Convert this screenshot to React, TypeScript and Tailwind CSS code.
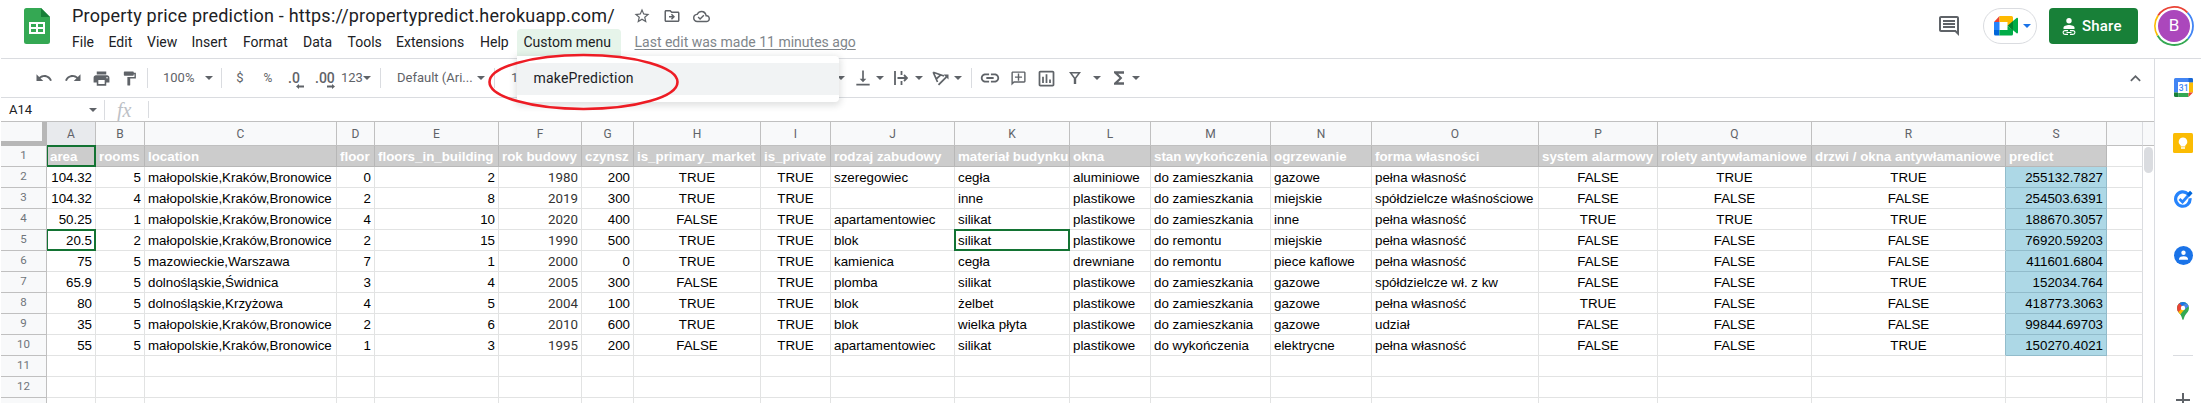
import type { ReactNode } from "react";
import {
  MdUndo, MdRedo, MdPrint, MdFormatPaint, MdVerticalAlignBottom, MdLink, MdOutlineAddComment,
  MdOutlineInsertChart, MdFunctions, MdStarBorder, MdOutlineDriveFileMove,
  MdOutlineCloudDone, MdOutlineInsertComment, MdKeyboardArrowUp, MdAdd,
} from "react-icons/md";

type Align = "left" | "right" | "center";
type Column = { id: string; width: string; align: Align; title: string; values: string[]; font?: string };

const TRUE = "TRUE";
const FALSE = "FALSE";
const krk = "małopolskie,Kraków,Bronowice";

const columns: Column[] = [
  { id: "A", width: "w-[49px]", align: "right", title: "area", values: ["104.32", "104.32", "50.25", "20.5", "75", "65.9", "80", "35", "55"] },
  { id: "B", width: "w-[49px]", align: "right", title: "rooms", values: ["5", "4", "1", "2", "5", "5", "5", "5", "5"] },
  { id: "C", width: "w-[192px]", align: "left", title: "location", values: [krk, krk, krk, krk, "mazowieckie,Warszawa", "dolnośląskie,Świdnica", "dolnośląskie,Krzyżowa", krk, krk] },
  { id: "D", width: "w-[38px]", align: "right", title: "floor", values: ["0", "2", "4", "2", "7", "3", "4", "2", "1"] },
  { id: "E", width: "w-[124px]", align: "right", title: "floors_in_building", values: ["2", "8", "10", "15", "1", "4", "5", "6", "3"] },
  { id: "F", width: "w-[83px]", align: "right", title: "rok budowy", font: "font-['Roboto',sans-serif] text-[#333333]", values: ["1980", "2019", "2020", "1990", "2000", "2005", "2004", "2010", "1995"] },
  { id: "G", width: "w-[52px]", align: "right", title: "czynsz", values: ["200", "300", "400", "500", "0", "300", "100", "600", "200"] },
  { id: "H", width: "w-[127px]", align: "center", title: "is_primary_market", values: [TRUE, TRUE, FALSE, TRUE, TRUE, FALSE, TRUE, TRUE, FALSE] },
  { id: "I", width: "w-[70px]", align: "center", title: "is_private", values: [TRUE, TRUE, TRUE, TRUE, TRUE, TRUE, TRUE, TRUE, TRUE] },
  { id: "J", width: "w-[124px]", align: "left", title: "rodzaj zabudowy", values: ["szeregowiec", "", "apartamentowiec", "blok", "kamienica", "plomba", "blok", "blok", "apartamentowiec"] },
  { id: "K", width: "w-[115px]", align: "left", title: "materiał budynku", values: ["cegła", "inne", "silikat", "silikat", "cegła", "silikat", "żelbet", "wielka płyta", "silikat"] },
  { id: "L", width: "w-[81px]", align: "left", title: "okna", values: ["aluminiowe", "plastikowe", "plastikowe", "plastikowe", "drewniane", "plastikowe", "plastikowe", "plastikowe", "plastikowe"] },
  { id: "M", width: "w-[120px]", align: "left", title: "stan wykończenia", values: ["do zamieszkania", "do zamieszkania", "do zamieszkania", "do remontu", "do remontu", "do zamieszkania", "do zamieszkania", "do zamieszkania", "do wykończenia"] },
  { id: "N", width: "w-[101px]", align: "left", title: "ogrzewanie", values: ["gazowe", "miejskie", "inne", "miejskie", "piece kaflowe", "gazowe", "gazowe", "gazowe", "elektrycne"] },
  { id: "O", width: "w-[167px]", align: "left", title: "forma własności", values: ["pełna własność", "spółdzielcze właśnościowe", "pełna własność", "pełna własność", "pełna własność", "spółdzielcze wł. z kw", "pełna własność", "udział", "pełna własność"] },
  { id: "P", width: "w-[119px]", align: "center", title: "system alarmowy", values: [FALSE, FALSE, TRUE, FALSE, FALSE, FALSE, TRUE, FALSE, FALSE] },
  { id: "Q", width: "w-[154px]", align: "center", title: "rolety antywłamaniowe", values: [TRUE, FALSE, TRUE, FALSE, FALSE, FALSE, FALSE, FALSE, FALSE] },
  { id: "R", width: "w-[194px]", align: "center", title: "drzwi / okna antywłamaniowe", values: [TRUE, FALSE, TRUE, FALSE, FALSE, TRUE, FALSE, FALSE, TRUE] },
  { id: "S", width: "w-[101px]", align: "right", title: "predict", values: ["255132.7827", "254503.6391", "188670.3057", "76920.59203", "411601.6804", "152034.764", "418773.3063", "99844.69703", "150270.4021"] },
];

const menus = [
  { label: "File", width: "w-[36.5px]" },
  { label: "Edit", width: "w-[38.5px]" },
  { label: "View", width: "w-[44.5px]" },
  { label: "Insert", width: "w-[51.5px]" },
  { label: "Format", width: "w-[60px]" },
  { label: "Data", width: "w-[44.5px]" },
  { label: "Tools", width: "w-[48.5px]" },
  { label: "Extensions", width: "w-[84px]" },
  { label: "Help", width: "w-[43.5px]" },
];

const justify: Record<Align, string> = { left: "justify-start", right: "justify-end", center: "justify-center" };

function Caret({ className = "text-[#5f6368]" }: { className?: string }) {
  return (
    <svg width="8" height="4" viewBox="0 0 8 4" className={`shrink-0 ${className}`}>
      <path d="M0 0h8L4 4z" fill="currentColor" />
    </svg>
  );
}

function Slot({ width, children }: { width: string; children?: ReactNode }) {
  return <div className={`flex shrink-0 items-center justify-center ${width}`}>{children}</div>;
}

function Rule() {
  return <div className="h-5 w-px shrink-0 bg-[#dadce0]" />;
}

function SheetsLogo() {
  return (
    <svg width="26" height="36" viewBox="0 0 26 36" className="shrink-0">
      <path d="M2.5 0H17l9 9v24.500a2.500 2.500 0 0 1-2.500 2.500h-21A2.500 2.500 0 0 1 0 33.500v-31A2.500 2.500 0 0 1 2.500 0z" fill="#34a853" />
      <path d="M17 0l9 9h-9z" fill="#188038" />
      <path d="M5 14h16v12H5zM7 16v3h5v-3zM14 16v3h5v-3zM7 21v3h5v-3zM14 21v3h5v-3z" fill="#fff" fillRule="evenodd" />
    </svg>
  );
}

function MeetIcon() {
  return (
    <svg width="24" height="20" viewBox="0 0 24 20" className="shrink-0">
      <path d="M5.500 0v6H0z" fill="#ea4335" />
      <path d="M0 6h5.500v8H0z" fill="#2684fc" />
      <path d="M0 14h5.500v5.500H1.500A1.500 1.500 0 0 1 0 18z" fill="#0066da" />
      <path d="M5.500 0H17.500A1.500 1.500 0 0 1 19 1.500V6l-5.500 4V6h-8z" fill="#ffba00" />
      <path d="M5.500 14h8v-4L19 14v4a1.500 1.500 0 0 1-1.500 1.500h-12z" fill="#00ac47" />
      <path d="M13.500 9.700L19 5v9.500z" fill="#00832d" />
      <path d="M19 5l3.600-3c.6-.5 1.400-.1 1.400.6v14c0 .8-.8 1.100-1.400.6L19 14.300z" fill="#00ac47" />
    </svg>
  );
}

function ShareIcon() {
  return (
    <svg width="14" height="17" viewBox="0 0 14 17" className="shrink-0">
      <circle cx="7" cy="2.700" r="2.700" fill="#fff" />
      <path d="M1.500 11V9.700C1.500 7.900 4.500 7 7 7s5.500.9 5.500 2.700V11z" fill="#fff" />
      <path d="M6 12.600H3a1.900 1.900 0 0 0 0 3.800h3M8 12.600h3a1.900 1.900 0 0 1 0 3.800H8M4.500 14.500h5" fill="none" stroke="#fff" strokeWidth="1.100" />
    </svg>
  );
}

function Avatar() {
  return (
    <div className="relative flex h-10 w-10 shrink-0 items-center justify-center">
      <svg width="40" height="40" viewBox="0 0 40 40" className="absolute inset-0" fill="none" strokeWidth="1.800">
        <path d="M4.100 9.500A19 19 0 0 1 33.500 6.600" stroke="#ea4335" />
        <path d="M33.500 6.600A19 19 0 0 1 34 32.800" stroke="#4285f4" />
        <path d="M34 32.800A19 19 0 0 1 3.500 29.500" stroke="#34a853" />
        <path d="M3.500 29.500A19 19 0 0 1 4.100 9.500" stroke="#fbbc04" />
      </svg>
      <div className="flex h-8 w-8 items-center justify-center rounded-full bg-[#ab47bc] text-[17px] text-white">B</div>
    </div>
  );
}

function TopBar() {
  return (
    <header className="flex h-[58px] shrink-0 pl-6">
      <div className="pt-2"><SheetsLogo /></div>
      <div className="flex flex-col">
        <div className="flex h-[29px] items-center pl-[22px] pt-[3px]">
          <div className="w-[560px] whitespace-nowrap text-[18px] leading-6 tracking-[0.22px] text-[#202124]">
            Property price prediction - https://propertypredict.herokuapp.com/
          </div>
          <div className="flex text-[#5f6368]">
            <Slot width="w-[20px]"><MdStarBorder size={18} /></Slot>
            <Slot width="w-[39px]"><MdOutlineDriveFileMove size={18} /></Slot>
            <Slot width="w-[21px]"><MdOutlineCloudDone size={17} /></Slot>
          </div>
        </div>
        <nav className="flex h-[27px] items-center pl-[15px] text-[14px] text-[#202124]">
          {menus.map((m) => (
            <div key={m.label} className={`shrink-0 whitespace-nowrap pl-[7px] ${m.width}`}>{m.label}</div>
          ))}
          <div className="relative h-[27px] w-[104px] shrink-0 rounded-t bg-[#e6f4ea] pl-[7px] leading-[27px]">
            Custom menu
            <div className="absolute left-0 top-[27px] z-10 h-[46px] w-[322px] rounded-b rounded-tr bg-white py-[7px] shadow-[0_2px_6px_2px_rgba(60,64,67,0.15)]">
              <div className="h-8 bg-[#f1f3f4] pl-[17px] leading-[31px] tracking-[0.2px]">makePrediction</div>
            </div>
            <svg width="196" height="62" viewBox="0 0 196 62" className="absolute left-[-31px] top-[22px] z-20">
              <ellipse cx="97.500" cy="31" rx="94" ry="27" fill="none" stroke="#ed1c24" strokeWidth="2.600" />
            </svg>
          </div>
          <div className="pl-[14px] text-[#80868b] underline underline-offset-2">Last edit was made 11 minutes ago</div>
        </nav>
      </div>
      <div className="ml-auto flex items-start pr-[7px] pt-2">
        <div className="mr-[22px] flex h-9 items-center text-[#5f6368]"><MdOutlineInsertComment size={24} /></div>
        <div className="mr-3 flex h-9 w-[54px] items-center rounded-full border border-[#dadce0] pl-[10px]">
          <MeetIcon />
          <span className="ml-[5px]"><Caret className="text-[#1a73e8]" /></span>
        </div>
        <div className="mr-4 flex h-9 w-[89px] items-center rounded bg-[#188038] pl-[13px] text-[15px] font-medium tracking-[0.2px] text-white">
          <ShareIcon />
          <span className="ml-[6px]">Share</span>
        </div>
        <div className="-mt-[2px]"><Avatar /></div>
      </div>
    </header>
  );
}

function Decimal({ text, forward }: { text: string; forward?: boolean }) {
  return (
    <div className="relative text-[14px] font-medium leading-4">
      {text}
      <svg width="8" height="5" viewBox="0 0 8 5" className={`absolute top-[14px] ${forward ? "-right-[2px] -scale-x-100" : "-right-[5px]"}`}>
        <path d="M0 2.500L3 0v1.600h5v1.800H3V5z" fill="#5f6368" />
      </svg>
    </div>
  );
}

function Toolbar() {
  return (
    <div className="flex h-[38px] shrink-0 items-center pl-[28px] text-[13px] text-[#5f6368]">
      <Slot width="w-[29px]"><MdUndo size={18} /></Slot>
      <Slot width="w-[29px]"><MdRedo size={18} /></Slot>
      <Slot width="w-[28px]"><MdPrint size={19} /></Slot>
      <Slot width="w-[29px]"><MdFormatPaint size={17} /></Slot>
      <div className="w-[3px]" />
      <Rule />
      <div className="w-[57px] shrink-0 pl-[15px]">100%</div>
      <Caret />
      <div className="w-2" />
      <Rule />
      <Slot width="w-[36px]">$</Slot>
      <Slot width="w-[20px]"><span className="text-[12px]">%</span></Slot>
      <div className="w-[37px] shrink-0 pl-[10px]"><div className="w-[11px]"><Decimal text=".0" /></div></div>
      <div className="w-[26px] shrink-0"><div className="w-[18px]"><Decimal text=".00" forward /></div></div>
      <div className="w-[22px] shrink-0 pb-px text-[13px]">123</div>
      <Caret />
      <div className="w-[9px]" />
      <Rule />
      <div className="w-[96px] shrink-0 whitespace-nowrap pl-[16px]">Default (Ari...</div>
      <Caret />
      <div className="w-[9px]" />
      <Rule />
      <div className="w-[342px] shrink-0 pl-4">10</div>
      <Caret />
      <div className="w-[8px]" />
      <Slot width="w-[20px]"><MdVerticalAlignBottom size={20} /></Slot>
      <Slot width="w-[14px]"><Caret /></Slot>
      <Slot width="w-[28px]">
        <svg width="14" height="14" viewBox="0 0 14 14" fill="none" stroke="#5f6368" strokeWidth="1.800">
          <path d="M1 0v14M7.500 0v4M7.500 10v4M3.500 7h9M10 4l3 3-3 3" />
        </svg>
      </Slot>
      <Slot width="w-[8px]"><Caret /></Slot>
      <div className="w-1" />
      <Slot width="w-[27px]">
        <svg width="17" height="15" viewBox="0 0 17 15" fill="none" stroke="#5f6368">
          <path d="M1.200 1.200L12 5M1.200 1.200L5.500 11M8.800 3.800L4.200 8" strokeWidth="1.700" />
          <path d="M6.500 13.800L14.500 5.800" strokeWidth="1.800" />
          <path d="M11.500 3.500H16.500V8.500z" fill="#5f6368" stroke="none" />
        </svg>
      </Slot>
      <Caret />
      <div className="w-[9px]" />
      <Rule />
      <Slot width="w-[36px]"><MdLink size={22} /></Slot>
      <Slot width="w-[20px]"><MdOutlineAddComment size={17} className="-scale-x-100" /></Slot>
      <Slot width="w-[36px]"><MdOutlineInsertChart size={21} /></Slot>
      <Slot width="w-[22px]">
        <svg width="12" height="12" viewBox="0 0 12 12" fill="#5f6368">
          <path fillRule="evenodd" d="M0 0h12L7.200 6.500V12H4.800V6.500zM3 1.500l3 4 3-4z" />
        </svg>
      </Slot>
      <Slot width="w-[22px]"><Caret /></Slot>
      <Slot width="w-[22px]"><MdFunctions size={20} /></Slot>
      <Slot width="w-[12px]"><Caret /></Slot>
      <div className="ml-auto mr-[8px]"><MdKeyboardArrowUp size={21} /></div>
    </div>
  );
}

function FormulaBar() {
  return (
    <div className="flex h-[23px] shrink-0 items-center">
      <div className="w-[81px] pl-2 text-[13px] text-[#202124]">A14</div>
      <Slot width="w-[22px]"><Caret /></Slot>
      <Rule />
      <div className="w-[43px] pl-3 font-['Liberation_Serif',serif] text-[20px] italic leading-5 text-[#bdc1c6]">fx</div>
      <div className="h-[17px] w-px bg-[#dadce0]" />
    </div>
  );
}

function Selection({ edge }: { edge: boolean }) {
  return (
    <div className={`pointer-events-none absolute -bottom-px -right-px z-10 border-2 border-[#137333] ${edge ? "left-0 border-l" : "-left-px"} -top-px`} />
  );
}

function Cell({ column, row }: { column: Column; row: number }) {
  const heading = row === 1;
  const value = heading ? column.title : column.values[row - 2] ?? "";
  const filled = row <= 10;
  const predicted = column.id === "S" && !heading && filled;
  const selected = (column.id === "A" && (row === 1 || row === 5)) || (column.id === "K" && row === 5);
  const tone = heading
    ? "bg-[#cccccc] border-[#b7b7b7] font-bold text-white justify-start"
    : predicted
      ? `bg-[#add8e6] border-[#92bccb] text-black ${justify[column.align]}`
      : `${column.id === "R" && filled ? "border-b-[#e2e3e3] border-r-[#92bccb]" : "border-[#e2e3e3]"} ${column.font ?? "text-black"} ${justify[column.align]}`;
  return (
    <div className={`relative flex h-[21px] shrink-0 items-center whitespace-nowrap border-b border-r px-[3px] pt-[2px] text-[13.33px] leading-4 ${column.width} ${tone}`}>
      {value}
      {selected && <Selection edge={column.id === "A"} />}
    </div>
  );
}

function Grid() {
  const rows = Array.from({ length: 13 }, (_, i) => i + 1);
  return (
    <div className="flex min-h-0 flex-1 overflow-hidden">
      <div className="flex w-[2142px] shrink-0 flex-col">
        <div className="flex h-6 shrink-0 bg-[#f8f9fa] text-[12px] text-[#5f6368]">
          <div className="w-[46px] shrink-0 border-b-[5px] border-r-[5px] border-[#b7b7b7]" />
          {columns.map((c) => (
            <div key={c.id} className={`flex shrink-0 items-center justify-center border-b border-r border-[#c0c0c0] ${c.width} ${c.id === "A" ? "bg-[#e8eaed]" : ""}`}>
              {c.id}
            </div>
          ))}
          <div className="w-9 shrink-0 border-b border-r border-b-[#c0c0c0] border-r-[#dadce0]" />
        </div>
        {rows.map((r) => (
          <div key={r} className="flex h-[21px] shrink-0 font-['Liberation_Sans',sans-serif]">
            <div className="flex w-[46px] shrink-0 items-center justify-center border-b border-r border-[#c0c0c0] bg-[#f8f9fa] font-['Roboto',sans-serif] text-[11.500px] text-[#70757a]">
              {r <= 12 ? r : null}
            </div>
            {columns.map((c) => <Cell key={c.id} column={c} row={r} />)}
            <div className="w-9 shrink-0 border-b border-r border-b-[#e2e3e3] border-r-[#dadce0]" />
          </div>
        ))}
      </div>
      <div className="flex w-[11px] shrink-0 flex-col">
        <div className="h-6 shrink-0 border-b border-[#c0c0c0] bg-[#f8f9fa]" />
        <div className="ml-px mt-px h-[26px] w-[9px] rounded-full bg-[#dadce0]" />
      </div>
    </div>
  );
}

function CalendarIcon() {
  return (
    <svg width="19" height="19" viewBox="0 0 19 19">
      <path d="M1.500 0H17.500A1.500 1.500 0 0 1 19 1.500V4.500H4.500V14.500H0V1.500A1.500 1.500 0 0 1 1.500 0z" fill="#4285f4" />
      <path d="M14.500 0h3A1.500 1.500 0 0 1 19 1.500V4.500h-4.500z" fill="#1967d2" />
      <path d="M14.500 4.500H19v10h-4.500z" fill="#fbbc04" />
      <path d="M4.500 14.500h10V19h-10z" fill="#34a853" />
      <path d="M0 14.500h4.500V19h-3A1.500 1.500 0 0 1 0 17.500z" fill="#188038" />
      <path d="M14.500 14.500H19L14.500 19z" fill="#ea4335" />
      <path d="M4 4h11v11H4z" fill="#fff" />
      <text x="9.700" y="12.600" textAnchor="middle" fontSize="8.500" fontWeight="500" fill="#4285f4" fontFamily="Roboto, sans-serif">31</text>
    </svg>
  );
}

function KeepIcon() {
  return (
    <svg width="20" height="20" viewBox="0 0 20 20">
      <rect width="20" height="20" rx="1.500" fill="#fbbc04" />
      <path d="M10 4.500a4.300 4.300 0 0 0-2.300 7.900v1.100h4.600v-1.100A4.300 4.300 0 0 0 10 4.500zM8 14.300h4v1.400H8z" fill="#fff" />
    </svg>
  );
}

function TasksIcon() {
  return (
    <svg width="19" height="19" viewBox="0 0 19 19" fill="none">
      <path d="M14 4A7.200 7.200 0 1 0 16 8.200" stroke="#2684fc" strokeWidth="3.200" />
      <path d="M5.500 9l3 3L17 2.500" stroke="#2684fc" strokeWidth="2.800" />
      <path d="M14 5.500l3.300-3.500" stroke="#0066da" strokeWidth="3.400" />
    </svg>
  );
}

function ContactsIcon() {
  return (
    <svg width="19" height="19" viewBox="0 0 19 19">
      <circle cx="9.500" cy="9.500" r="9.500" fill="#1a73e8" />
      <circle cx="9.500" cy="6.700" r="2.200" fill="#fff" />
      <path d="M5 13.800v-1c0-1.700 2.800-2.500 4.500-2.500s4.500.8 4.500 2.500v1z" fill="#fff" />
    </svg>
  );
}

function MapsIcon() {
  return (
    <svg width="12" height="18" viewBox="0 0 12 18">
      <clipPath id="pin"><path d="M6 0a6 6 0 0 1 6 6c0 3.200-2.200 4.800-3.800 7.300C7 15.300 6.900 18 6 18s-1-2.700-2.200-4.700C2.200 10.800 0 9.200 0 6a6 6 0 0 1 6-6z" /></clipPath>
      <g clipPath="url(#pin)">
        <path d="M0 0h12v18H0z" fill="#34a853" />
        <path d="M-1 9.500L6 2l6 0L2 14z" fill="#fbbc04" />
        <path d="M0 0h4l2 5-5.500 6L-1 9z" fill="#ea4335" />
        <path d="M2 1l3.500 3.500L10.500 0H4z" fill="#1a73e8" />
        <path d="M5 5l6-5 1 4-5 4z" fill="#4285f4" />
      </g>
      <circle cx="6" cy="6" r="2.200" fill="#fff" />
    </svg>
  );
}

function SidePanel() {
  const icons = [<CalendarIcon />, <KeepIcon />, <TasksIcon />, <ContactsIcon />, <MapsIcon />];
  return (
    <aside className="flex w-[46px] shrink-0 flex-col items-center pl-[10px]">
      {icons.map((icon, i) => (
        <div key={i} className="flex h-14 shrink-0 items-center justify-center">{icon}</div>
      ))}
      <div className="mt-4 h-px w-5 shrink-0 bg-[#dadce0]" />
      <div className="mt-8 shrink-0 text-[#5f6368]"><MdAdd size={24} /></div>
    </aside>
  );
}

export default function App() {
  return (
    <div className="flex h-[403px] w-[2201px] flex-col overflow-hidden bg-white font-['Roboto',sans-serif]">
      <TopBar />
      <div className="ml-px h-px shrink-0 bg-[#dadce0]" />
      <div className="flex min-h-0 flex-1">
        <main className="ml-px flex w-[2154px] shrink-0 flex-col border-r border-[#dadce0]">
          <Toolbar />
          <div className="h-px shrink-0 bg-[#dadce0]" />
          <FormulaBar />
          <div className="h-px shrink-0 bg-[#c0c0c0]" />
          <Grid />
        </main>
        <SidePanel />
      </div>
    </div>
  );
}
